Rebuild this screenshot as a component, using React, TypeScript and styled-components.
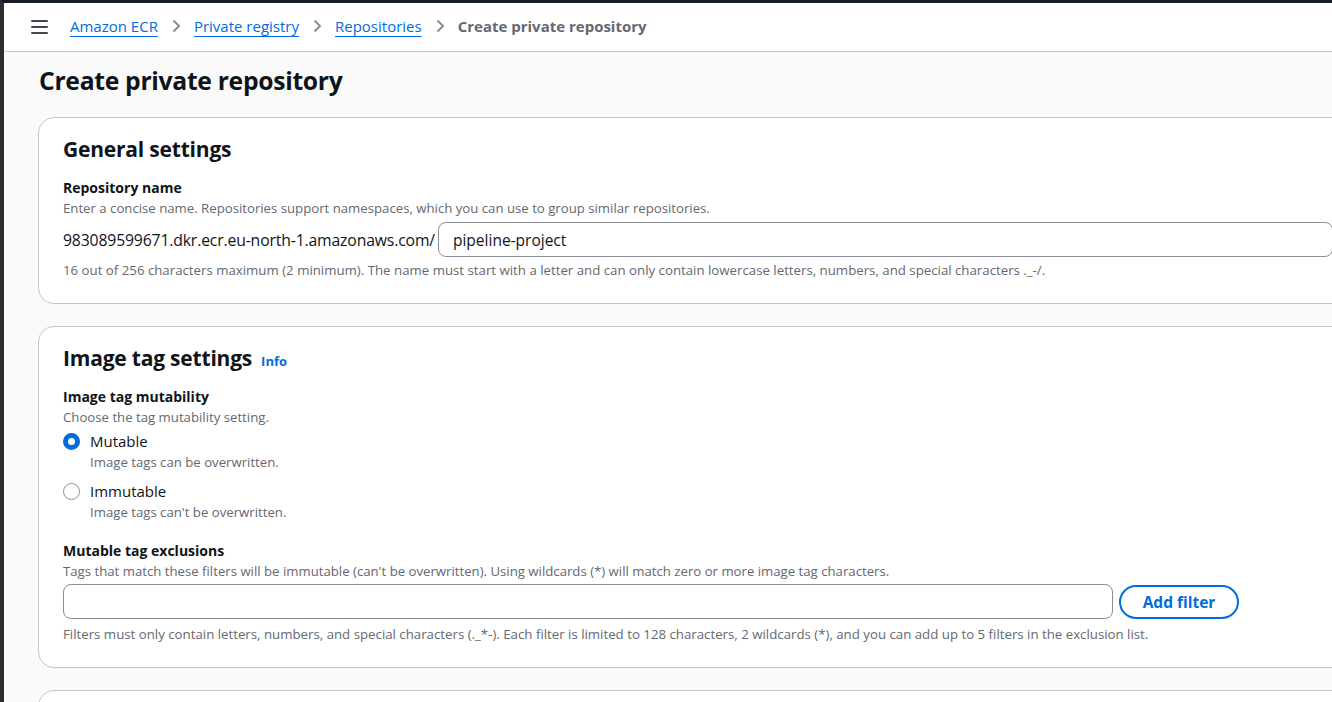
import React from 'react';
import styled, { createGlobalStyle } from 'styled-components';

const GlobalStyle = createGlobalStyle`
  html, body {
    margin: 0;
    padding: 0;
    background: #2b2b2b;
  }
  body {
    font-family: "Open Sans", "Noto Sans", sans-serif;
    color: #0f141a;
  }
`;

const Frame = styled.div`
  width: 1328px;
  height: 699px;
  border-top: 3px solid #161d26;
  border-left: 4px solid #2d2d2d;
  background: #fafafa;
  overflow: hidden;
`;

const TopBar = styled.header`
  height: 48px;
  background: #ffffff;
  border-bottom: 1px solid #c6c6cd;
  display: flex;
  align-items: center;
  padding-left: 27px;
  gap: 22px;
`;

const Burger = styled.button`
  border: none;
  background: none;
  padding: 0;
  width: 17px;
  height: 14px;
  display: flex;
  flex-direction: column;
  justify-content: space-between;
  cursor: pointer;

  span {
    display: block;
    height: 2px;
    background: #424650;
    border-radius: 1px;
  }
`;

const Crumbs = styled.nav`
  display: flex;
  align-items: center;
  gap: 13px;
  font-size: 15px;
  margin-top: -2px;
`;

const CrumbLink = styled.a`
  color: #006ce0;
  text-decoration: underline;
  text-underline-offset: 4px;
  text-decoration-thickness: 1px;
`;

const CrumbCurrent = styled.span`
  color: #656871;
  font-weight: 700;
`;

const Main = styled.main`
  padding: 13px 0 0 34px;
`;

const PageTitle = styled.h1`
  margin: 0 0 20px 1px;
  font-size: 24.7px;
  line-height: 32px;
  font-weight: 700;
  letter-spacing: -0.3px;
`;

const Card = styled.section`
  width: 1320px;
  box-sizing: border-box;
  background: #ffffff;
  border: 1px solid #c6c6cd;
  border-radius: 16px;
  padding: 17px 24px 23px;
  margin-bottom: 22px;
`;

const CardTitle = styled.h2`
  margin: 0 0 16px;
  font-size: 21px;
  line-height: 28px;
  font-weight: 700;
  letter-spacing: -0.2px;
`;

const InfoLink = styled.a`
  margin-left: 9px;
  color: #006ce0;
  font-size: 13px;
  line-height: 1;
  font-weight: 700;
  letter-spacing: 0;
  text-decoration: none;
`;

const Field = styled.div<{ $gap?: number }>`
  margin-bottom: ${p => p.$gap ?? 0}px;
`;

const Label = styled.div`
  margin-bottom: 1px;
  font-size: 14px;
  line-height: 18px;
  font-weight: 700;
`;

const Description = styled.div`
  font-size: 13.2px;
  line-height: 20px;
  color: #656871;
`;

const Constraint = styled.div<{ $offset?: number }>`
  margin-top: ${p => p.$offset ?? 3}px;
  font-size: 13.25px;
  line-height: 20px;
  color: #656871;
`;

const PrefixRow = styled.div`
  display: flex;
  align-items: center;
  margin-top: 4px;
`;

const Prefix = styled.span`
  font-size: 15.75px;
  margin-right: 3px;
  letter-spacing: -0.15px;
`;

const TextInput = styled.input<{ $width?: string }>`
  box-sizing: border-box;
  height: 35px;
  width: ${p => p.$width ?? 'auto'};
  flex: ${p => (p.$width ? 'none' : '1')};
  border: 1px solid #8c8c94;
  border-radius: 8px;
  padding: 0 14px;
  font-family: inherit;
  font-size: 15.5px;
  color: #0f141a;
  background: #ffffff;
  outline: none;
`;

const RadioGroup = styled.div`
  margin-top: 3px;
  display: flex;
  flex-direction: column;
  gap: 8px;
`;

const RadioOption = styled.label`
  display: grid;
  grid-template-columns: 18px 1fr;
  column-gap: 9px;
  cursor: pointer;
`;

const RadioDot = styled.span<{ $checked?: boolean }>`
  box-sizing: border-box;
  margin-top: 3px;
  width: 17px;
  height: 17px;
  border-radius: 50%;
  border: ${p => (p.$checked ? '5px solid #006ce0' : '1.5px solid #8c8c94')};
  background: #ffffff;
`;

const RadioText = styled.div`
  font-size: 15px;
  line-height: 22px;
`;

const FilterRow = styled.div`
  display: flex;
  align-items: center;
  gap: 6px;
  margin-top: 3px;
`;

const OutlineButton = styled.button`
  box-sizing: border-box;
  height: 34px;
  width: 120px;
  padding: 0;
  border: 2px solid #006ce0;
  border-radius: 20px;
  background: #ffffff;
  color: #006ce0;
  font-family: inherit;
  font-size: 15.5px;
  font-weight: 700;
  cursor: pointer;
`;

const Chevron = () => (
  <svg width="10" height="14" viewBox="0 0 10 14" fill="none">
    <path d="M2.5 1.5 8 7l-5.5 5.5" stroke="#8c8c94" strokeWidth="2" />
  </svg>
);

const options = [
  { label: 'Mutable', hint: 'Image tags can be overwritten.', checked: true },
  { label: 'Immutable', hint: "Image tags can't be overwritten.", checked: false },
];

export default function App() {
  return (
    <>
      <GlobalStyle />
      <Frame>
        <TopBar>
          <Burger aria-label="Open navigation">
            <span />
            <span />
            <span />
          </Burger>
          <Crumbs>
            <CrumbLink href="#">Amazon ECR</CrumbLink>
            <Chevron />
            <CrumbLink href="#">Private registry</CrumbLink>
            <Chevron />
            <CrumbLink href="#">Repositories</CrumbLink>
            <Chevron />
            <CrumbCurrent>Create private repository</CrumbCurrent>
          </Crumbs>
        </TopBar>

        <Main>
          <PageTitle>Create private repository</PageTitle>

          <Card>
            <CardTitle>General settings</CardTitle>
            <Field>
              <Label>Repository name</Label>
              <Description>
                Enter a concise name. Repositories support namespaces, which you can use to group similar repositories.
              </Description>
              <PrefixRow>
                <Prefix>983089599671.dkr.ecr.eu-north-1.amazonaws.com/</Prefix>
                <TextInput defaultValue="pipeline-project" />
              </PrefixRow>
              <Constraint>
                16 out of 256 characters maximum (2 minimum). The name must start with a letter and can only contain
                lowercase letters, numbers, and special characters ._-/.
              </Constraint>
            </Field>
          </Card>

          <Card>
            <CardTitle>
              Image tag settings<InfoLink href="#">Info</InfoLink>
            </CardTitle>
            <Field $gap={20}>
              <Label>Image tag mutability</Label>
              <Description>Choose the tag mutability setting.</Description>
              <RadioGroup>
                {options.map(o => (
                  <RadioOption key={o.label}>
                    <RadioDot $checked={o.checked} />
                    <div>
                      <RadioText>{o.label}</RadioText>
                      <Description>{o.hint}</Description>
                    </div>
                  </RadioOption>
                ))}
              </RadioGroup>
            </Field>
            <Field>
              <Label>Mutable tag exclusions</Label>
              <Description>
                Tags that match these filters will be immutable (can't be overwritten). Using wildcards (*) will match
                zero or more image tag characters.
              </Description>
              <FilterRow>
                <TextInput $width="1050px" />
                <OutlineButton>Add filter</OutlineButton>
              </FilterRow>
              <Constraint $offset={5}>
                Filters must only contain letters, numbers, and special characters (._*-). Each filter is limited to
                128 characters, 2 wildcards (*), and you can add up to 5 filters in the exclusion list.
              </Constraint>
            </Field>
          </Card>

          <Card />
        </Main>
      </Frame>
    </>
  );
}
